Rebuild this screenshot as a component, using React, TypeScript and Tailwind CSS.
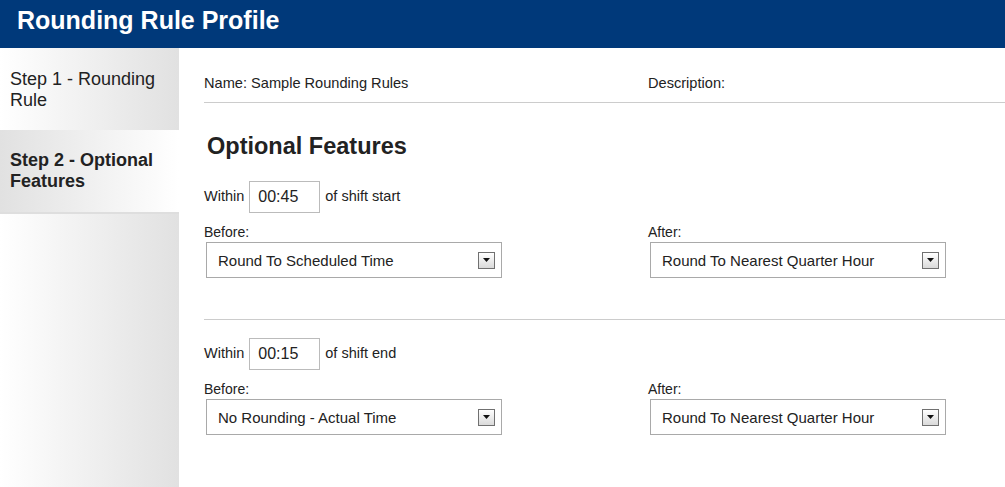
import React from "react";

const font = { fontFamily: '"Liberation Sans", Arial, sans-serif' };

// Fake dropdown that looks like the old IE select
function Select({ value }: { value: string }) {
  return (
    <div className="flex items-center justify-between w-[296px] h-[36px] border border-[#a9a9a9] bg-white pl-[11px] pr-[6px]">
      <span className="text-[15px] text-[#222] mt-[2px]">{value}</span>
      <span className="flex items-center justify-center w-[17px] h-[17px] border border-[#707070] bg-gradient-to-b from-white to-[#dadada]">
        <svg width="7" height="4" viewBox="0 0 7 4">
          <path d="M0 0h7L3.5 4z" fill="#111" />
        </svg>
      </span>
    </div>
  );
}

function WithinRow({ value, label }: { value: string; label: string }) {
  return (
    <div className="flex items-center gap-[5px] text-[14.5px] text-[#222]">
      <span>Within</span>
      <div className="w-[71px] h-[32px] border border-[#bbbbbb] bg-white flex items-center pl-[8px] text-[16px]">
        {value}
      </div>
      <span>{label}</span>
    </div>
  );
}

function RuleBlock({
  within,
  label,
  before,
  after,
}: {
  within: string;
  label: string;
  before: string;
  after: string;
}) {
  return (
    <div>
      <WithinRow value={within} label={label} />
      <div className="grid grid-cols-[444px_1fr] mt-[11px]">
        <div>
          <div className="text-[14px] text-[#222] leading-[16px]">Before:</div>
          <div className="mt-[2px] ml-[2px]">
            <Select value={before} />
          </div>
        </div>
        <div>
          <div className="text-[14px] text-[#222] leading-[16px]">After:</div>
          <div className="mt-[2px] ml-[2px]">
            <Select value={after} />
          </div>
        </div>
      </div>
    </div>
  );
}

export default function App() {
  return (
    <div style={font} className="w-[1005px] h-[487px] overflow-hidden flex flex-col bg-white">
      {/* Header */}
      <header className="h-[48px] shrink-0 bg-[#00397a] flex items-center pl-[17px]">
        <h1 className="text-[25px] font-bold text-white leading-none -mt-[8px]">
          Rounding Rule Profile
        </h1>
      </header>

      <div className="flex flex-1 min-h-0">
        {/* Steps sidebar */}
        <aside className="w-[179px] shrink-0 flex flex-col">
          <div className="h-[82px] px-[10px] pt-[21px] bg-gradient-to-r from-white to-[#e1e1e1] text-[18px] leading-[21px] text-[#222]">
            Step 1 - Rounding Rule
          </div>
          <div className="h-[82px] px-[10px] pt-[20px] bg-gradient-to-r from-[#e1e1e1] to-white text-[18px] leading-[21px] font-bold text-[#222]">
            Step 2 - Optional Features
          </div>
          <div className="flex-1 border-t-2 border-[#dedede] bg-gradient-to-r from-white to-[#e1e1e1]" />
        </aside>

        {/* Main content */}
        <main className="flex-1 pl-[25px]">
          <div className="grid grid-cols-[444px_1fr] pt-[27px] pb-[11px] border-b border-[#cccccc] text-[14.6px] leading-[16px] text-[#222]">
            <span>Name: Sample Rounding Rules</span>
            <span>Description:</span>
          </div>

          <h2 className="mt-[31px] ml-[3px] text-[23.5px] leading-[25px] font-bold text-[#222]">
            Optional Features
          </h2>

          <div className="mt-[22px] pb-[41px] border-b border-[#cccccc]">
            <RuleBlock
              within="00:45"
              label="of shift start"
              before="Round To Scheduled Time"
              after="Round To Nearest Quarter Hour"
            />
          </div>

          <div className="mt-[18px]">
            <RuleBlock
              within="00:15"
              label="of shift end"
              before="No Rounding - Actual Time"
              after="Round To Nearest Quarter Hour"
            />
          </div>
        </main>
      </div>
    </div>
  );
}
